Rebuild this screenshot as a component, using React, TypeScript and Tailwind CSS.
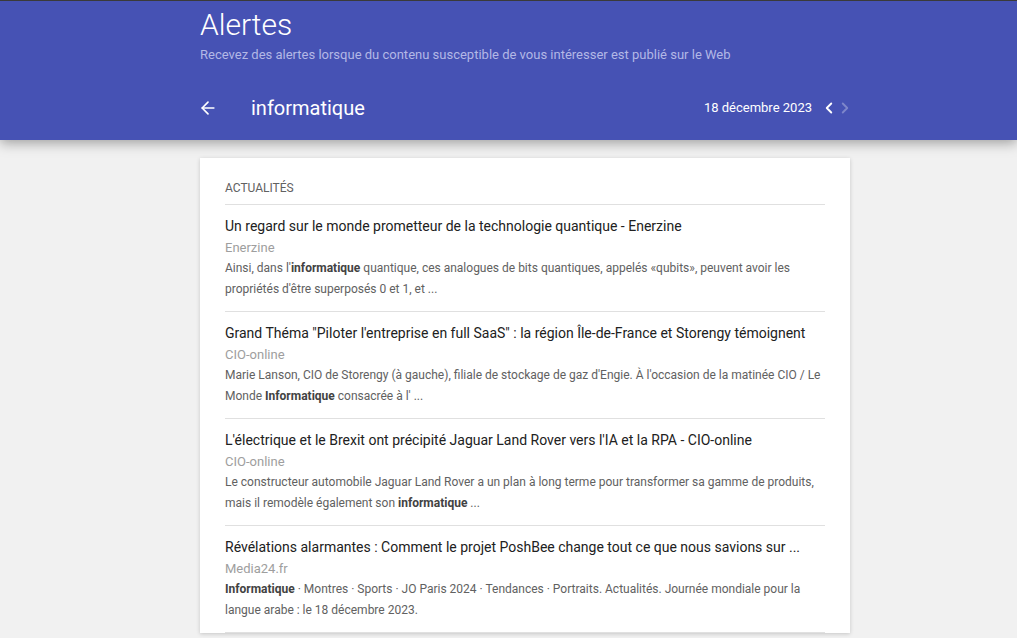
import { ArrowLeft, ChevronLeft, ChevronRight } from "lucide-react";

type Item = {
  title: string;
  source: string;
  snippet: React.ReactNode;
};

const items: Item[] = [
  {
    title: "Un regard sur le monde prometteur de la technologie quantique - Enerzine",
    source: "Enerzine",
    snippet: (
      <>
        Ainsi, dans l'<b className="font-bold text-[#424242]">informatique</b> quantique, ces analogues de bits quantiques, appelés «qubits», peuvent avoir les propriétés d'être superposés 0 et 1, et ...
      </>
    ),
  },
  {
    title: "Grand Théma \"Piloter l'entreprise en full SaaS\" : la région Île-de-France et Storengy témoignent",
    source: "CIO-online",
    snippet: (
      <>
        Marie Lanson, CIO de Storengy (à gauche), filiale de stockage de gaz d'Engie. À l'occasion de la matinée CIO / Le Monde <b className="font-bold text-[#424242]">Informatique</b> consacrée à l' ...
      </>
    ),
  },
  {
    title: "L'électrique et le Brexit ont précipité Jaguar Land Rover vers l'IA et la RPA - CIO-online",
    source: "CIO-online",
    snippet: (
      <>
        Le constructeur automobile Jaguar Land Rover a un plan à long terme pour transformer sa gamme de produits, mais il remodèle également son <b className="font-bold text-[#424242]">informatique</b> ...
      </>
    ),
  },
  {
    title: "Révélations alarmantes : Comment le projet PoshBee change tout ce que nous savions sur ...",
    source: "Media24.fr",
    snippet: (
      <>
        <b className="font-bold text-[#424242]">Informatique</b> · Montres · Sports · JO Paris 2024 · Tendances · Portraits. Actualités. Journée mondiale pour la langue arabe : le 18 décembre 2023.
      </>
    ),
  },
];

export default function App() {
  return (
    <div className="h-screen overflow-hidden bg-[#f1f1f1] font-['Roboto',sans-serif]">
      {/* Header */}
      <header className="relative z-10 h-[140px] border-t border-[#3a3a3a] bg-[#4652b4] shadow-[0_3px_12px_rgba(0,0,0,0.35)]">
        <div className="ml-[200px] w-[650px] pt-[6px]">
          <h1 className="text-[30px] font-light leading-[36px] text-white">Alertes</h1>
          <p className="mt-[3px] text-[13px] leading-[18px] text-[#b3b8e6]">
            Recevez des alertes lorsque du contenu susceptible de vous intéresser est publié sur le Web
          </p>
          <div className="mt-[31px] flex items-center">
            <ArrowLeft className="-ml-[2px] h-[20px] w-[20px] text-white" strokeWidth={2} />
            <span className="ml-[33px] text-[20px] leading-[26px] text-white">informatique</span>
            <span className="ml-auto text-[13px] text-white">18 décembre 2023</span>
            <div className="-mr-[4px] ml-[8px] flex items-center">
              <ChevronLeft className="h-[18px] w-[18px] text-white" strokeWidth={2.5} />
              <ChevronRight className="-ml-[2px] h-[18px] w-[18px] text-white/30" strokeWidth={2.5} />
            </div>
          </div>
        </div>
      </header>

      {/* Card */}
      <main className="ml-[200px] mt-[18px] w-[650px] bg-white px-[25px] pt-[22px] shadow-[0_1px_4px_rgba(0,0,0,0.18)]">
        <div className="border-b border-[#e0e0e0] pb-[8px] text-[12px] leading-[16px] text-[#616161] uppercase">
          Actualités
        </div>
        {items.map((item) => (
          <div key={item.title} className="border-b border-[#e0e0e0] py-[11px]">
            <div className="text-[14px] leading-[21px] text-[#212121]">{item.title}</div>
            <div className="text-[13px] leading-[21px] text-[#9e9e9e]">{item.source}</div>
            <div className="text-[12px] leading-[21px] text-[#616161]">{item.snippet}</div>
          </div>
        ))}
      </main>
    </div>
  );
}
